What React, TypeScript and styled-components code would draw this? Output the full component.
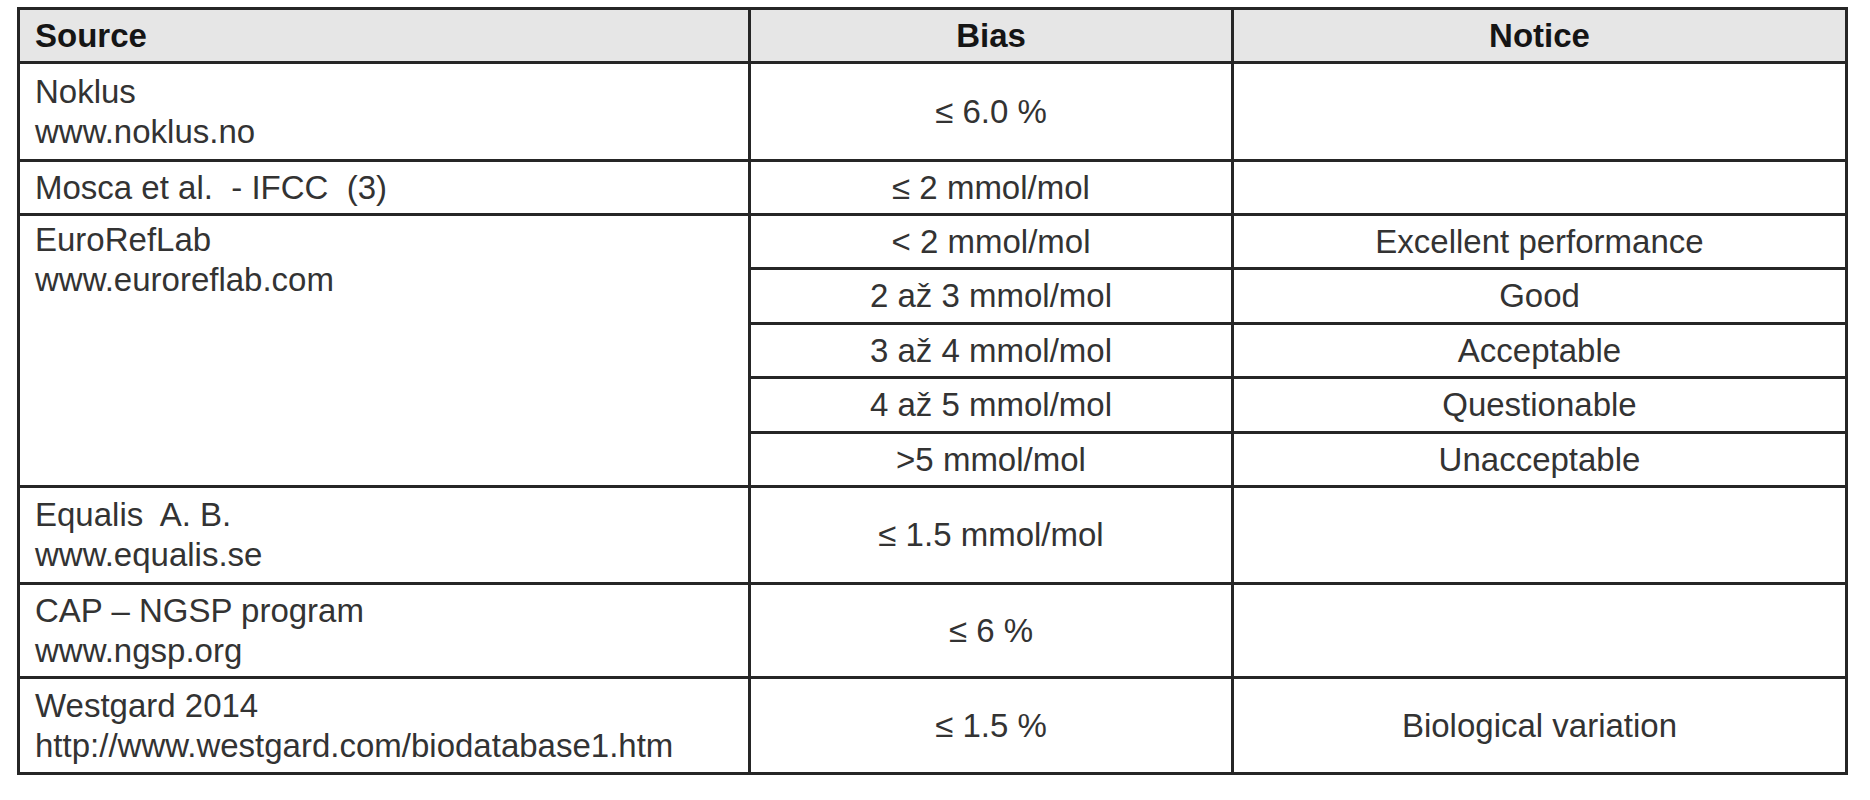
import React from "react";
import styled, { createGlobalStyle } from "styled-components";

const GlobalStyle = createGlobalStyle`
    body {
        margin: 0;
        background: #ffffff;
        font-family: "Liberation Sans", Arial, Helvetica, sans-serif;
    }
`;

const Page = styled.div`
    padding: 7px 0 0 17px;
`;

const Table = styled.div`
    display: grid;
    width: max-content;
    grid-template-columns: 728px 480px 611px;
    grid-template-rows: 51px 95px 51px 51px 52px 51px 52px 51px 94px 91px 93px;
    gap: 3px;
    padding: 3px;
    background-color: #262626;
`;

const HeadCell = styled.div<{ $left?: boolean }>`
    display: flex;
    align-items: center;
    justify-content: ${(p) => (p.$left ? "flex-start" : "center")};
    padding-left: ${(p) => (p.$left ? "15px" : "0")};
    background-color: #e6e6e6;
    color: #151515;
    font-size: 33px;
    font-weight: bold;
`;

const SourceCell = styled.div<{ $span?: number; $top?: boolean }>`
    display: flex;
    flex-direction: column;
    justify-content: ${(p) => (p.$top ? "flex-start" : "center")};
    padding: ${(p) => (p.$top ? "4px 15px 0" : "0 15px")};
    grid-row: span ${(p) => p.$span ?? 1};
    background-color: #ffffff;
    color: #333333;
    font-size: 33px;
    line-height: 40px;
    white-space: pre;
`;

const ValueCell = styled.div`
    display: flex;
    align-items: center;
    justify-content: center;
    background-color: #ffffff;
    color: #333333;
    font-size: 33px;
    white-space: pre;
`;

type Entry = {
    source: string[];
    values: [string, string][];
};

const entries: Entry[] = [
    { source: ["Noklus", "www.noklus.no"], values: [["≤ 6.0 %", ""]] },
    { source: ["Mosca et al.  - IFCC  (3)"], values: [["≤ 2 mmol/mol", ""]] },
    {
        source: ["EuroRefLab", "www.euroreflab.com"],
        values: [
            ["< 2 mmol/mol", "Excellent performance"],
            ["2 až 3 mmol/mol", "Good"],
            ["3 až 4 mmol/mol", "Acceptable"],
            ["4 až 5 mmol/mol", "Questionable"],
            [">5 mmol/mol", "Unacceptable"],
        ],
    },
    { source: ["Equalis  A. B.", "www.equalis.se"], values: [["≤ 1.5 mmol/mol", ""]] },
    { source: ["CAP – NGSP program", "www.ngsp.org"], values: [["≤ 6 %", ""]] },
    {
        source: ["Westgard 2014", "http://www.westgard.com/biodatabase1.htm"],
        values: [["≤ 1.5 %", "Biological variation"]],
    },
];

function App() {
    return (
        <Page>
            <GlobalStyle />
            <Table>
                <HeadCell $left>Source</HeadCell>
                <HeadCell>Bias</HeadCell>
                <HeadCell>Notice</HeadCell>
                {entries.map((e) => (
                    <React.Fragment key={e.source[0]}>
                        <SourceCell $span={e.values.length} $top={e.values.length > 1}>
                            {e.source.map((line) => (
                                <span key={line}>{line}</span>
                            ))}
                        </SourceCell>
                        {e.values.map(([bias, notice]) => (
                            <React.Fragment key={bias}>
                                <ValueCell>{bias}</ValueCell>
                                <ValueCell>{notice}</ValueCell>
                            </React.Fragment>
                        ))}
                    </React.Fragment>
                ))}
            </Table>
        </Page>
    );
}

export default App;
